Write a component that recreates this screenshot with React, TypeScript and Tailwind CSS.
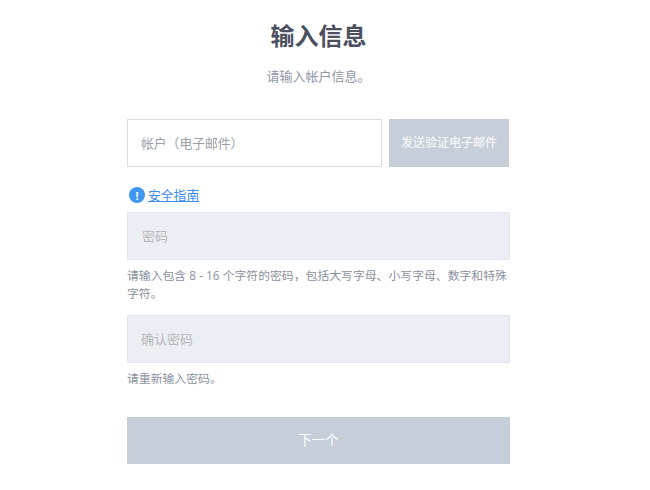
export default function App() {
  return (
    <div className="min-h-[490px] w-[650px] bg-white font-['Open_Sans','Noto_Sans_CJK_SC',sans-serif]">
      <div className="ml-[127px] w-[383px]">
        <h1 className="w-full pt-[19px] text-center text-2xl leading-[34px] font-bold text-[#4b4f5e]">输入信息</h1>
        <p className="mt-[14px] text-center text-[13px] leading-[18px] text-[#9097a8]">请输入帐户信息。</p>
        <div className="mt-[34px] flex gap-[7px]">
          <input
            readOnly
            placeholder="帐户（电子邮件）"
            className="h-12 w-[255px] border border-[#d8dce3] bg-white px-[13px] text-[12.8px] outline-none placeholder:text-[#9a9fa9]"
          />
          <button className="h-12 w-[120px] bg-[#c5ced9] text-[12px] text-white">发送验证电子邮件</button>
        </div>
        <div className="mt-5 flex h-4 items-start gap-[3px] pl-[2px]">
          <span className="flex size-4 items-center justify-center rounded-full bg-[#4097f0] text-[11px] leading-none font-bold text-white">!</span>
          <a href="#" className="text-[12.8px] leading-4 text-[#3d8ef0] underline">安全指南</a>
        </div>
        <input
          readOnly
          placeholder="密码"
          className="mt-[9px] block h-12 w-full rounded-[1px] border border-[#e2e5ea] bg-[#ebeef2] px-[14px] text-[13px] outline-none placeholder:text-[#b5b7bb]"
        />
        <p className="mt-[6px] text-[11.85px] leading-[18px] text-[#8a91a0]">请输入包含 8 - 16 个字符的密码，包括大写字母、小写字母、数字和特殊字符。</p>
        <input
          readOnly
          placeholder="确认密码"
          className="mt-[13px] block h-12 w-full rounded-[1px] border border-[#e2e5ea] bg-[#ebeef2] px-[13px] text-[13px] outline-none placeholder:text-[#b5b7bb]"
        />
        <p className="mt-[6px] text-[11.85px] leading-[18px] text-[#8a91a0]">请重新输入密码。</p>
        <button className="mt-[30px] block h-[47px] w-full bg-[#c5ced9] text-[13.5px] text-white">下一个</button>
      </div>
    </div>
  );
}
